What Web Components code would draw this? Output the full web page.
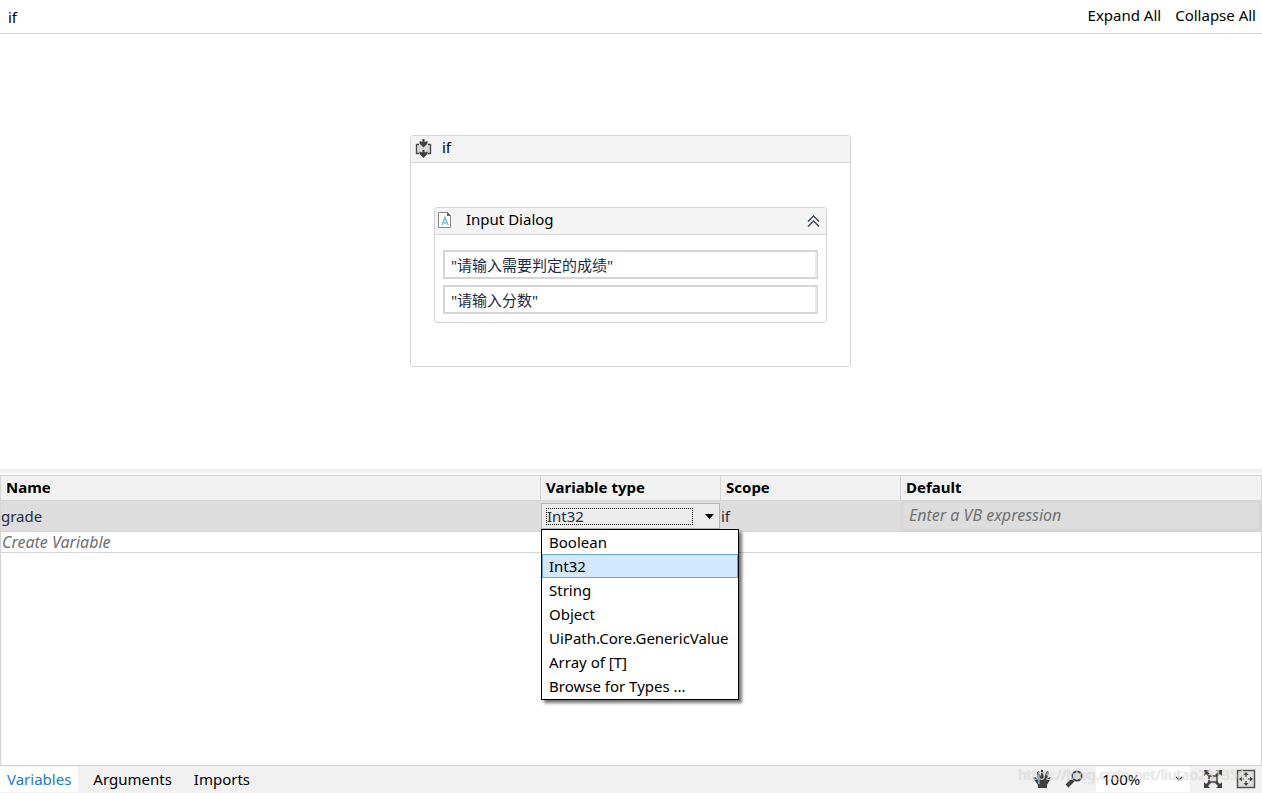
<!DOCTYPE html>
<html lang="en">
<head>
<meta charset="utf-8">
<title>Workflow designer</title>
<style>
html, body { margin: 0; height: 100%; }
body { font: 15px/20px "Noto Sans", "Noto Sans CJK SC", sans-serif; color: #000; background: #fff; overflow: hidden; }
</style>
</head>
<body>
<workflow-app></workflow-app>
<script>
function define(name, html) {
  const template = document.createElement('template');
  template.innerHTML = html;
  customElements.define(name, class extends HTMLElement {
    constructor() {
      super();
      this.attachShadow({ mode: 'open' }).appendChild(template.content.cloneNode(true));
    }
  });
}

define('bread-bar', `
<style>
:host { display: flex; justify-content: space-between; align-items: center; padding: 0 6px 0 8px; height: 33px; border-bottom: 1px solid #d5d5d5; flex: none; }
nav { display: flex; gap: 14px; }
button { font: inherit; color: inherit; background: none; border: 0; padding: 0; margin: 0; }
nav button { padding-bottom: 4px; }
</style>
<button type="button">if</button>
<nav><button type="button">Expand All</button><button type="button">Collapse All</button></nav>`);

define('activity-card', `
<style>
:host { display: block; box-sizing: border-box; border: 1px solid #d5d5d5; border-radius: 3px; background: #fff; }
header { display: flex; align-items: center; box-sizing: border-box; height: 27px; background: #f4f4f4; border-bottom: 1px solid #d5d5d5; border-radius: 2px 2px 0 0; }
.title { flex: 1; padding-bottom: 4px; }
.icon { width: 31px; display: flex; }
</style>
<header><span class="icon"><slot name="icon"></slot></span><span class="title"><slot name="title"></slot></span><slot name="action"></slot></header>
<slot></slot>`);

define('expression-box', `
<style>
:host { display: block; }
input { display: block; box-sizing: border-box; width: 100%; height: 29px; margin: 0; padding: 0 6px; border: 2px solid #d5d5d5; border-right: 1px solid #d5d5d5; box-shadow: inset -2px 0 #ebebeb; border-radius: 0; background: #fff; color: #1e2a40; font: inherit; outline: 0; }
</style>
<input type="text">`);

define('designer-canvas', `
<style>
:host { flex: 1; display: flex; align-items: center; justify-content: center; padding: 0 1px 2px 0; min-height: 0; }
.outer { width: 441px; }
.sequence { padding: 44px 23px 43px; }
.fields { display: grid; gap: 6px; padding: 15px 8px 8px; }
svg { display: block; }
button { display: flex; border: 0; padding: 0; margin: 0 6px 0 0; background: none; }
</style>
<activity-card class="outer">
  <svg slot="icon" width="24" height="24" viewBox="0 0 24 24"><path d="M5 7h15v10H5z" fill="#d9d9d9"/><path d="M8 7.500H5.500v9H8M17 7.500h2.500v9H17" fill="none" stroke="#4a4a4a" stroke-width="1.400"/><path d="M11.500 2h2v3l3-1v2.500l-4 4-4-4V4l3 1zM11.500 13h2v2.500l3-1V17l-4 4-4-4v-2.500l3 1z" fill="#404040"/></svg>
  <span slot="title">if</span>
  <div class="sequence">
    <activity-card>
      <svg slot="icon" width="18" height="22" viewBox="0 0 18 22"><path d="M3.500 2.500h9l3 3v12h-12z" fill="#fff" stroke="#858585"/><path d="M12 2l4 4h-4z" fill="#666"/><path d="M7 15l3-7.500 3 7.500M8 12.800h4" fill="none" stroke="#73bce2" stroke-width="1.500"/></svg>
      <span slot="title">Input Dialog</span>
      <button slot="action" type="button" aria-label="Collapse"><svg width="14" height="14" viewBox="0 0 14 14"><path d="M2 7.500L7.500 2l5.500 5.500M2 12.500L7.500 7l5.500 5.500" fill="none" stroke="#3d465a" stroke-width="1.400"/></svg></button>
      <div class="fields"><expression-box></expression-box><expression-box></expression-box></div>
    </activity-card>
  </div>
</activity-card>`);

define('type-menu', `
<style>
:host { display: block; box-sizing: border-box; width: 198px; border: 1px solid #000; background: #fff; color: #000; box-shadow: 3px 3px 3px #0000008c; }
ul { list-style: none; margin: 0; padding: 0 0 1px; }
li { box-sizing: border-box; height: 24px; line-height: 22px; border: 1px solid transparent; padding: 0 5px 0 6px; white-space: nowrap; }
li[aria-selected=true] { background: #d1e8ff; border-color: #66a7e8; }
</style>
<ul role="listbox" aria-label="Variable types"><li role="option">Boolean</li><li role="option" aria-selected="true">Int32</li><li role="option">String</li><li role="option">Object</li><li role="option">UiPath.Core.GenericValue</li><li role="option">Array of [T]</li><li role="option">Browse for Types ...</li></ul>`);

define('type-picker', `
<style>
:host { display: block; position: relative; }
.box { display: flex; align-items: center; justify-content: space-between; box-sizing: border-box; height: 26px; margin-right: 1px; border: 1px solid #b4b4b4; background: #ececec; padding: 0 5px 0 4px; }
select { appearance: none; width: 147px; height: 17px; margin: 0; padding: 0; border: 1px dotted #000; border-radius: 0; background: none; color: #1e2a40; font: inherit; line-height: 15px; outline: 0; }
type-menu { position: absolute; left: 0; top: 100%; z-index: 2; }
</style>
<div class="box"><select aria-label="Variable type"><option>Int32</option></select><svg width="9" height="5" viewBox="0 0 9 5"><path d="M0 0h9L4.500 5z"/></svg></div>
<type-menu></type-menu>`);

define('variable-grid', `
<style>
:host { display: block; flex: 1; box-sizing: border-box; border: 1px solid #d5d5d5; min-height: 0; }
table { width: 100%; table-layout: fixed; border-collapse: separate; border-spacing: 0; }
th, td { text-align: left; padding: 0; font-weight: 400; border-bottom: 1px solid #d5d5d5; box-sizing: border-box; }
th { height: 25px; background: #f1f1f1; font-weight: 700; padding: 0 5px 2px; border-right: 1px solid #d5d5d5; }
th:last-child { border-right: 0; }
.row td { height: 31px; background: #ddd; color: #1e2a40; }
.create td { height: 21px; line-height: 18px; color: #707070; font-size: 16px; font-style: italic; padding-left: 1px; }
.name { width: 540px; } .mid { width: 180px; }
input { display: block; box-sizing: border-box; width: 100%; height: 30px; margin: 0; border: 2px solid #d6d6d6; background: none; padding: 0 6px 2px; font: inherit; font-size: 16px; font-style: italic; outline: 0; }
input::placeholder { color: #707070; opacity: 1; }
</style>
<table>
<colgroup><col class="name"><col class="mid"><col class="mid"><col></colgroup>
<thead><tr><th>Name</th><th>Variable type</th><th>Scope</th><th>Default</th></tr></thead>
<tbody><tr class="row"><td>grade</td><td><type-picker></type-picker></td><td>if</td><td><input type="text" aria-label="Default" placeholder="Enter a VB expression"></td></tr>
<tr class="create"><td colspan="4">Create Variable</td></tr></tbody>
</table>`);

define('status-bar', `
<style>
:host { display: flex; position: relative; flex: none; height: 27px; box-sizing: border-box; padding: 1px 0; background: #f1f1f1; }
button { font: inherit; color: inherit; background: none; border: 0; margin: 0; padding: 0; }
.tabs { display: flex; flex: 1; gap: 8px; }
.tabs button { padding: 0 7px 2px; }
.tabs button:first-child { background: #fff; color: #2478cf; }
.tools { display: flex; align-items: center; padding-right: 6px; gap: 13px; }
.tools svg { display: block; }
.tools button { padding-bottom: 2px; }
.zoom { display: flex; align-items: center; background: #fff; width: 94px; height: 25px; box-sizing: border-box; padding: 0 7px 2px 6px; }
select { appearance: none; flex: 1; min-width: 0; border: 0; padding: 0; margin: 0; background: none; font: inherit; color: inherit; outline: 0; }
.mark { position: absolute; right: 16px; top: 0; font-size: 14px; line-height: 18px; color: #ffffffb3; text-shadow: 0 0 1px #0000004d; pointer-events: none; }
</style>
<div class="tabs"><button type="button">Variables</button><button type="button">Arguments</button><button type="button">Imports</button></div>
<div class="tools">
<button type="button" aria-label="Pan"><svg width="20" height="20" viewBox="0 0 20 20"><path d="M6 19v-3L1 9l2-1 3 3L5 3l2-1 2 6V1h2l1 7 3-6 2 1-2 7 3-2 1 1-4 7v3z" fill="#404040"/></svg></button>
<button type="button" aria-label="Zoom"><svg width="18" height="18" viewBox="0 0 18 18"><circle cx="12" cy="6" r="4.500" fill="#ddd" stroke="#404040" stroke-width="2"/><path d="M8 10l-6 6" stroke="#404040" stroke-width="4"/></svg></button>
<div class="zoom"><select aria-label="Zoom level"><option>100%</option></select><svg width="8" height="6" viewBox="0 0 8 6"><path d="M1 1l3 3 3-3" fill="none" stroke="#404040" stroke-width="1.200"/></svg></div>
<button type="button" aria-label="Fit to screen"><svg width="20" height="20" viewBox="0 0 20 20"><path d="M1 1h6L5 3l3 3-2 2-3-3-2 2zM19 1h-6l2 2-3 3 2 2 3-3 2 2zM1 19h6l-2-2 3-3-2-2-3 3-2-2zM19 19h-6l2-2-3-3 2-2 3 3 2-2z" fill="#404040"/><path d="M6 7h8v6H6z" fill="#ddd" stroke="#404040" stroke-width="1.500"/></svg></button>
<button type="button" aria-label="Overview"><svg width="20" height="20" viewBox="0 0 20 20"><path d="M1.500 1.500h17v17h-17z" fill="#dedede" stroke="#505050" stroke-width="1.500"/><path d="M10 3l2.500 3h-5zM10 17l2.500-3h-5zM3 10l3-2.500v5zM17 10l-3-2.500v5z" fill="#404040"/><path d="M10 5v3M10 12v3M5 10h3M12 10h3" stroke="#404040" stroke-width="1.200"/></svg></button>
</div>
<span class="mark">https://blog.csdn.net/liutao231351</span>`);

define('workflow-app', `
<style>
:host { display: flex; flex-direction: column; height: 100vh; }
.split { height: 4px; background: #f0f0f0; flex: none; margin-bottom: 2px; }
.panel { display: flex; flex-direction: column; height: 318px; flex: none; }
</style>
<bread-bar></bread-bar>
<designer-canvas></designer-canvas>
<div class="split" role="separator"></div>
<section class="panel"><variable-grid></variable-grid><status-bar></status-bar></section>`);

const boxes = document.querySelector('workflow-app').shadowRoot.querySelector('designer-canvas').shadowRoot.querySelectorAll('expression-box');
[['"请输入需要判定的成绩"', 'Label'], ['"请输入分数"', 'Title']].forEach(([value, label], i) => {
  const input = boxes[i].shadowRoot.querySelector('input');
  input.value = value;
  input.setAttribute('aria-label', label);
});
</script>
</body>
</html>
